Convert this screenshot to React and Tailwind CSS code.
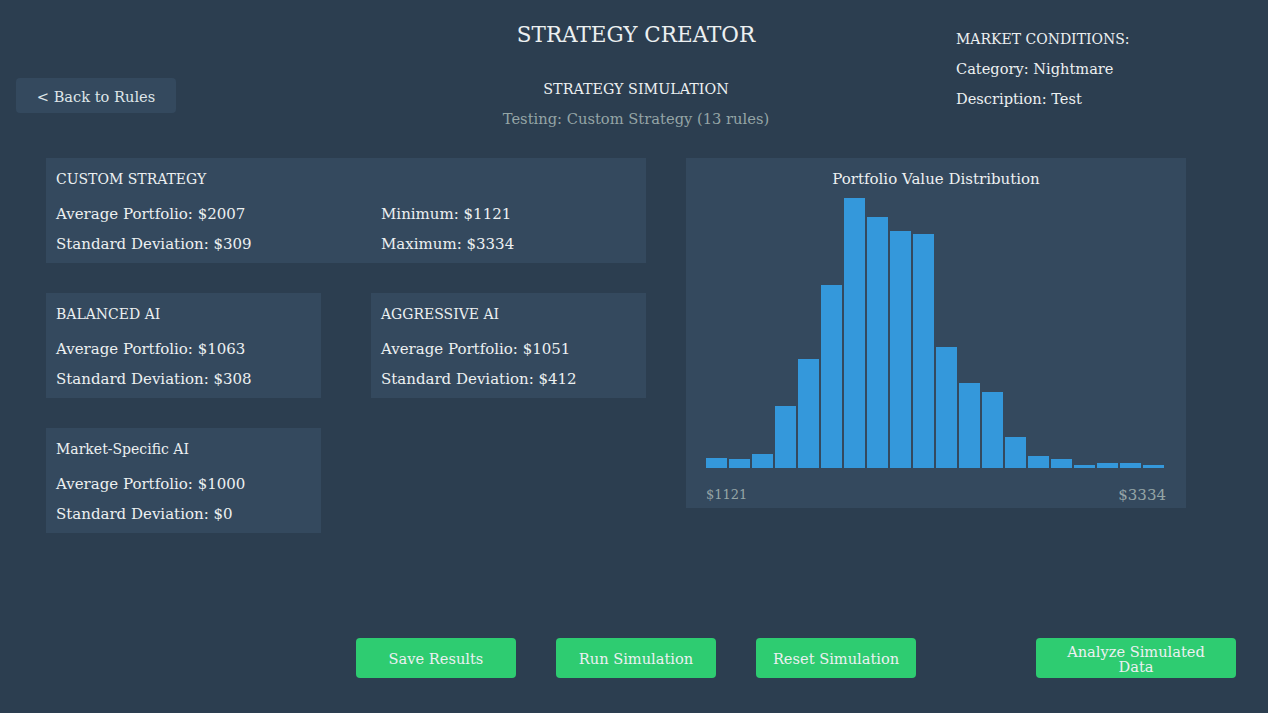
const bars = [10, 9, 14, 62, 109, 183, 270, 251, 237, 234, 121, 85, 76, 31, 12, 9, 3, 5, 5, 3];

function Panel({ title, rows, className = "" }) {
  return (
    <div className={"h-[105px] bg-[#34495e] px-[10px] pt-[6px] " + className}>
      <div className="leading-[30px] text-[14px]">{title}</div>
      <div className="mt-[5px]">
        {rows.map((r, i) => (
          <div key={i} className="leading-[30px] text-[15px]">{r}</div>
        ))}
      </div>
    </div>
  );
}

export default function App() {
  return (
    <div
      className="w-[1268px] h-[713px] bg-[#2c3e50] text-[#ecf0f1] overflow-hidden"
      style={{ fontFamily: '"DejaVu Serif", serif' }}
    >
      <div className="grid grid-cols-[316px_640px_312px] h-[158px]">
        <div className="pt-[78px] pl-[16px]">
          <button className="w-[160px] h-[35px] pt-[3px] rounded-[4px] bg-[#34495e] text-[14.6px] text-[#dfe6e9]">
            &lt; Back to Rules
          </button>
        </div>
        <div className="pt-[22px] flex flex-col items-center">
          <div className="leading-[26px] text-[21.5px]">STRATEGY CREATOR</div>
          <div className="mt-[31px] leading-[20px] text-[14.3px]">STRATEGY SIMULATION</div>
          <div className="mt-[10px] leading-[20px] text-[14.7px] text-[#95a5a6]">Testing: Custom Strategy (13 rules)</div>
        </div>
        <div className="pt-[24px] leading-[30px]">
          <div className="text-[14px]">MARKET CONDITIONS:</div>
          <div className="text-[14.6px]">Category: Nightmare</div>
          <div className="text-[14.6px]">Description: Test</div>
        </div>
      </div>

      <div className="flex pl-[46px] gap-[40px]">
        <div className="w-[600px] flex flex-col gap-[30px]">
          <div className="h-[105px] bg-[#34495e] px-[10px] pt-[6px]">
            <div className="leading-[30px] text-[14px]">CUSTOM STRATEGY</div>
            <div className="mt-[5px] grid grid-cols-[325px_1fr] text-[15px] leading-[30px]">
              <div>Average Portfolio: $2007</div>
              <div>Minimum: $1121</div>
              <div>Standard Deviation: $309</div>
              <div>Maximum: $3334</div>
            </div>
          </div>
          <div className="flex gap-[50px]">
            <Panel className="w-[275px]" title="BALANCED AI" rows={["Average Portfolio: $1063", "Standard Deviation: $308"]} />
            <Panel className="w-[275px]" title="AGGRESSIVE AI" rows={["Average Portfolio: $1051", "Standard Deviation: $412"]} />
          </div>
          <div className="flex">
            <Panel className="w-[275px]" title="Market-Specific AI" rows={["Average Portfolio: $1000", "Standard Deviation: $0"]} />
          </div>
        </div>

        <div className="w-[500px] h-[350px] bg-[#34495e] px-[20px] pt-[6px]">
          <div className="leading-[30px] text-[15px] text-center">Portfolio Value Distribution</div>
          <div className="mt-[4px] h-[270px] flex items-end gap-[2px]">
            {bars.map((h, i) => (
              <div key={i} className="w-[21px] bg-[#3498db]" style={{ height: h + "px" }} />
            ))}
          </div>
          <div className="mt-[17px] flex justify-between items-center leading-[20px] text-[#95a5a6]">
            <span className="text-[13px]">$1121</span>
            <span className="text-[15px]">$3334</span>
          </div>
        </div>
      </div>

      <div className="mt-[105px] flex justify-end pr-[32px]">
        <div className="flex gap-[40px]">
          <button className="w-[160px] h-[40px] pt-[2px] rounded-[4px] bg-[#2ecc71] text-[14.6px] text-[#ecf0f1]">Save Results</button>
          <button className="w-[160px] h-[40px] pt-[2px] rounded-[4px] bg-[#2ecc71] text-[14.6px] text-[#ecf0f1]">Run Simulation</button>
          <button className="w-[160px] h-[40px] pt-[2px] rounded-[4px] bg-[#2ecc71] text-[14.6px] text-[#ecf0f1]">Reset Simulation</button>
        </div>
        <button className="ml-[120px] w-[200px] h-[40px] pt-[2px] rounded-[4px] bg-[#2ecc71] text-[14.6px] leading-[15px] text-[#ecf0f1] px-[20px]">
          Analyze Simulated Data
        </button>
      </div>
    </div>
  );
}
